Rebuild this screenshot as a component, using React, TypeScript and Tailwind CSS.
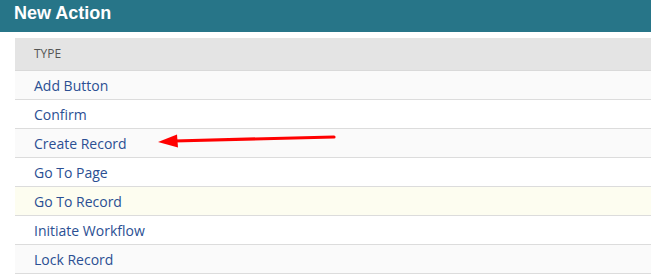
const rows = [
  { label: "Add Button", bg: "bg-[#fafafa]" },
  { label: "Confirm", bg: "bg-white" },
  { label: "Create Record", bg: "bg-[#fafafa]" },
  { label: "Go To Page", bg: "bg-white" },
  { label: "Go To Record", bg: "bg-[#fdfdf0]" },
  { label: "Initiate Workflow", bg: "bg-white" },
  { label: "Lock Record", bg: "bg-[#fafafa]" },
];

function Arrow() {
  return (
    <svg
      className="absolute left-[150px] top-[128px]"
      width="200"
      height="24"
      viewBox="0 0 200 24"
    >
      <path d="M184 9 L24 13" stroke="#ff0000" strokeWidth="3.2" strokeLinecap="round" />
      <path d="M8 14 L27 6.5 L28 19.5 Z" fill="#ff0000" />
    </svg>
  );
}

export default function App() {
  return (
    <div className="relative h-[278px] w-[651px] overflow-hidden bg-white font-['Open_Sans','Noto_Sans',sans-serif]">
      <div className="flex h-[32px] items-start bg-[#277588] px-[14px] pt-[1px]">
        <h1 className="font-['Liberation_Sans',Arial,sans-serif] text-[18px] font-bold leading-[24px] text-white">
          New Action
        </h1>
      </div>
      <div className="ml-[15px] mt-[6px]">
        <div className="flex h-[33px] items-center border-b border-[#d9d9d9] bg-[#e4e4e4] pl-[19px] text-[12px] text-[#555]">
          TYPE
        </div>
        {rows.map((r) => (
          <div
            key={r.label}
            className={`flex h-[29px] items-center border-b border-[#dcdcdc] pl-[19px] text-[14px] text-[#2b4f93] ${r.bg}`}
          >
            {r.label}
          </div>
        ))}
      </div>
      <Arrow />
    </div>
  );
}
